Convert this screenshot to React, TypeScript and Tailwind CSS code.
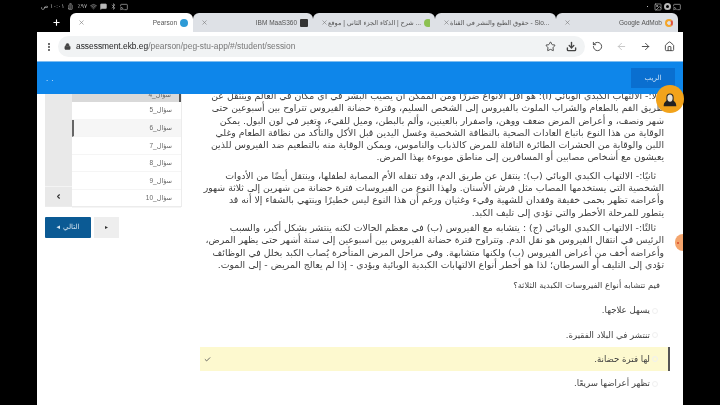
import { ArrowLeft, ArrowRight, ChevronLeft, Download, Home, Lock, MoreVertical, Plus, RotateCcw, Star, X, Check, Wifi, BatteryFull, Bluetooth, Cast, Image, MessageSquare } from 'lucide-react'

const tabs = [
  { title: 'Pearson', active: true, icon: 'w-[8px] h-[8px] rounded-full bg-[#2d9ad6]', w: 'w-[123px]' },
  { title: 'IBM MaaS360', icon: 'w-[8px] h-[8px] rounded-[1px] bg-[#333333]', w: 'w-[120px]' },
  { title: 'شرح | الذكاء الجزء الثاني | موقع ...', icon: 'w-[8px] h-[8px] rounded-full bg-[#8cc152]', w: 'w-[122px]' },
  { title: 'حقوق الطبع والنشر في القناة - Sio...', icon: 'w-[8px] h-[6px] rounded-[2px] bg-[#e53935]', w: 'w-[121px]' },
  { title: 'Google AdMob', icon: 'w-[8px] h-[8px] rounded-full border-2 border-[#f4a62a] border-r-[#e0533d]', w: 'w-[122px]' },
]

const questions = [5, 6, 7, 8, 9, 10]

const p1 = [
  'أولا:- الالتهاب الكبدي الوبائي (أ): هو أقل الأنواع ضررًا ومن الممكن أن يصيب البشر في أي مكان في العالم وينتقل عن',
  'طريق الفم بالطعام والشراب الملوث بالفيروس إلى الشخص السليم، وفترة حضانة الفيروس تتراوح بين أسبوعين حتى',
  'شهر ونصف، و أعراض المرض ضعف ووهن، واصفرار بالعينين، وألم بالبطن، وميل للقيء، وتغير في لون البول. يمكن',
  'الوقاية من هذا النوع باتباع العادات الصحية بالنظافة الشخصية وغسل اليدين قبل الأكل والتأكد من نظافة الطعام وغلي',
  'اللبن والوقاية من الحشرات الطائرة الناقلة للمرض كالذباب والناموس، ويمكن الوقاية منه بالتطعيم ضد الفيروس للذين',
  'يعيشون مع أشخاص مصابين أو المسافرين إلى مناطق موبوءة بهذا المرض.',
]
const p2 = [
  'ثانيًا:- الالتهاب الكبدي الوبائي (ب): ينتقل عن طريق الدم، وقد تنقله الأم المصابة لطفلها، وينتقل أيضًا من الأدوات',
  'الشخصية التي يستخدمها المصاب مثل فرش الأسنان. ولهذا النوع من الفيروسات فترة حضانة من شهرين إلى ثلاثة شهور',
  'وأعراضه تظهر بحمى خفيفة وفقدان للشهية وقيء وغثيان ورغم أن هذا النوع ليس خطيرًا وينتهي بالشفاء إلا أنه قد',
  'يتطور للمرحلة الأخطر والتي تؤدي إلى تليف الكبد.',
]
const p3 = [
  'ثالثًا:- الالتهاب الكبدي الوبائي (ج) : يتشابه مع الفيروس (ب) في معظم الحالات لكنه ينتشر بشكل أكبر، والسبب',
  'الرئيس في انتقال الفيروس هو نقل الدم. وتتراوح فترة حضانة الفيروس بين أسبوعين إلى ستة أشهر حتى يظهر المرض،',
  'وأعراضه أخف من أعراض الفيروس (ب) ولكنها متشابهة. وفي مراحل المرض المتأخرة يُصاب الكبد بخلل في الوظائف',
  'تؤدي إلى التليف أو السرطان؛ لذا هو أخطر أنواع الالتهابات الكبدية الوبائية ويؤدي - إذا لم يعالج المريض - إلى الموت.',
]

function Para({ lines, className }: { lines: string[]; className?: string }) {
  return (
    <div className={className}>
      {lines.map((l, i) => (
        <div key={i} className={`whitespace-nowrap h-[12.3px] leading-[12.3px] ${i === 0 && lines.length === 4 ? 'pr-[8px]' : ''}`}>{l}</div>
      ))}
    </div>
  )
}

function Option({ text, selected }: { text: string; selected?: boolean }) {
  return (
    <div className={`flex items-center justify-between h-[24.3px] pl-[4px] ${selected ? 'bg-[#fdf9cf] border-r-2 border-[#555555] pr-[10px]' : 'pr-[12px]'}`}>
      <div className="flex items-center gap-[2px]">
        <span className="w-[6px] h-[6px] rounded-full border border-[#f0f0f0]" />
        <span>{text}</span>
      </div>
      {selected && <Check size={7} strokeWidth={3} className="text-[#555555]" />}
    </div>
  )
}

export default function App() {
  return (
    <div className="relative w-[720px] h-[405px] bg-black overflow-hidden flex flex-col font-['Liberation_Sans','DejaVu_Sans',sans-serif] blur-[0.5px]">
      {/* android status bar */}
      <div className="h-[13px] pl-[41px] pr-[39px] flex items-center justify-between text-[#b9b9b9]">
        <div className="flex items-center gap-[3px]">
          <span className="text-[6px] whitespace-nowrap">١٠:٠١ ص</span>
          <BatteryFull size={7} className="rotate-[-90deg]" />
          <span className="text-[6px]">٪٩٧</span>
          <Wifi size={7} />
          <MessageSquare size={7} fill="currentColor" />
          <Bluetooth size={7} />
          <Cast size={8} />
        </div>
        <div className="flex items-center gap-[2px]">
          <span className="w-[1px] h-[1px] bg-[#b9b9b9] mr-[4px]" />
          <Image size={8} />
          <span className="w-[7px] h-[7px] rounded-full border-2 border-[#b9b9b9]" />
          <Cast size={8} />
        </div>
      </div>

      {/* tab strip */}
      <div className="h-[19px] flex items-end">
        <div className="w-[70px] h-full flex items-center justify-end pr-[9px] text-white">
          <Plus size={9} strokeWidth={3} />
        </div>
        {tabs.map((t) => (
          <div key={t.title} className={`${t.w} h-full flex items-center justify-between pl-[8px] pr-[5px] rounded-t-[6px] text-[6.5px] ${t.active ? 'bg-white' : 'bg-[#dee1e6]'} text-[#555555]`}>
            <X size={7} className="text-[#777777] shrink-0" />
            <div className="flex items-center gap-[3px] overflow-hidden whitespace-nowrap">
              <span>{t.title}</span>
              <span className={`shrink-0 ${t.icon}`} />
            </div>
          </div>
        ))}
      </div>

      {/* window */}
      <div className="w-[646px] ml-[37px] flex-1 bg-white flex flex-col min-h-0">
        <div className="h-[29px] flex items-center pl-[7px] pr-[7px] text-[#444444]">
          <MoreVertical size={10} strokeWidth={3} />
          <div className="ml-[4px] w-[527px] h-[21px] rounded-full bg-[#f1f3f4] flex items-center pl-[6px] pr-[8px] text-[8.4px]">
            <Lock size={7} fill="currentColor" />
            <span className="ml-[5px] flex-1 whitespace-nowrap text-[#777777]"><span className="text-[#222222]">assessment.ekb.eg</span>/pearson/peg-stu-app/#/student/session</span>
            <Star size={11} className="mr-[10px]" />
            <Download size={11} strokeWidth={3} />
          </div>
          <div className="flex-1 flex items-center justify-between pl-[7px] pr-[1px]">
            <RotateCcw size={11} />
            <ArrowLeft size={11} className="text-[#c4c4c4]" />
            <ArrowRight size={11} />
            <Home size={11} />
          </div>
        </div>

        <div className="h-[33px] bg-[#0e86ea] border-t border-[#7fbdf0] flex items-center justify-between pl-[9px] pr-[8px] shrink-0">
          <span className="text-white text-[8px] tracking-[3px] mt-[2px]">..</span>
          <div className="w-[44px] h-[20px] bg-[#0a6fd0] text-[#cfe4f8] text-[7px] flex items-center justify-center">الريب</div>
        </div>

        <div className="flex-1 min-h-0 overflow-hidden flex pl-[8px] text-[#3d3d3d]">
          <div className="w-[137px] shrink-0 flex flex-col">
            <div className="flex h-[113px] border-b border-r border-[#ececec]">
              <div className="w-[27px] bg-[#e9e9e9] flex flex-col justify-end">
                <div className="h-[20px] flex items-center justify-center border-t border-[#f4f4f4]">
                  <ChevronLeft size={7} strokeWidth={4} className="text-[#333333]" />
                </div>
              </div>
              <div dir="rtl" className="flex-1 text-[6.5px] text-[#666666]">
                <div className="h-[8px] bg-[#d9d9d9] border-r-2 border-[#555555] pr-[8px] leading-[1px]">سؤال_4</div>
                {questions.map((q) => (
                  <div key={q} className={`h-[17.6px] flex items-center pr-[9px] border-b border-[#f5f5f5] ${q === 6 ? 'bg-[#f6f6f6] border-l-2 border-l-[#666666]' : ''}`}>سؤال_{q}</div>
                ))}
              </div>
            </div>
            <div className="flex gap-[3px] mt-[10px] text-[7px]">
              <div className="w-[46px] h-[21px] bg-[#0b5a94] text-[#d6e6f2] flex items-center justify-center gap-[3px] rounded-[1px]">
                <span>◂</span><span>التالي</span>
              </div>
              <div className="w-[25px] h-[21px] bg-[#eeeeee] text-[#333333] flex items-center justify-center text-[6px]">▸</div>
            </div>
          </div>

          <div dir="rtl" className="flex-1 min-w-0 pr-[19px] pl-[18px] text-[9.35px] font-['DejaVu_Sans',sans-serif]">
            <Para lines={p1} className="-mt-[4px]" />
            <Para lines={p2} className="mt-[6px]" />
            <Para lines={p3} className="mt-[3px]" />
            <div className="mt-[8px] text-[8.3px] pr-[4px]">فيم تتشابه أنواع الفيروسات الكبدية الثلاثة؟</div>
            <div className="mt-[7px] text-[8.6px] -mr-[6px] flex flex-col">
              <Option text="يسهل علاجها." />
              <Option text="تنتشر في البلاد الفقيرة." />
              <Option text="لها فترة حضانة." selected />
              <Option text="تظهر أعراضها سريعًا." />
            </div>
          </div>
        </div>
      </div>

      {/* floating avatar */}
      <div className="absolute left-[656px] top-[85px] w-[28px] h-[28px] rounded-full bg-[#f2a31b] flex items-center justify-center">
        <svg width="18" height="18" viewBox="0 0 20 20">
          <path d="M3 18c0-4 2-5 3-6V8a4 4 0 0 1 8 0v4c1 1 3 2 3 6z" fill="#222" />
          <ellipse cx="10" cy="9" rx="3" ry="4" fill="#e8e3d8" />
        </svg>
      </div>
      {/* floating side handle */}
      <div className="absolute left-[675px] top-[234px] w-[8px] h-[17px] rounded-l-full bg-[#f4a56d] flex items-center pl-[2px]">
        <span className="w-[2px] h-[2px] rounded-full bg-[#d9482b]" />
      </div>
    </div>
  )
}
